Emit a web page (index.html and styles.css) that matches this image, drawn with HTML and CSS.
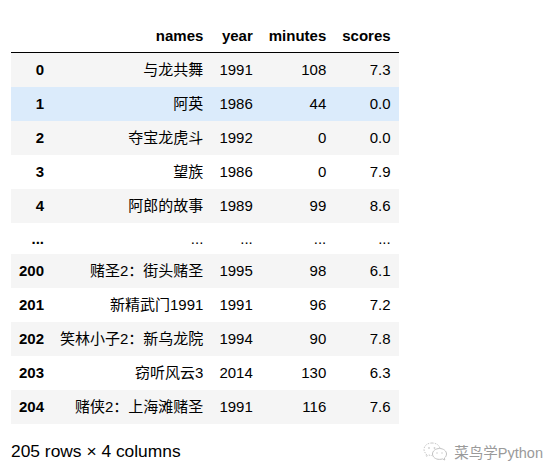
FILE: index.html
```html
<!DOCTYPE html>
<html>
<head>
<meta charset="utf-8">
<link rel="stylesheet" href="styles.css">
</head>
<body>
<div class="page">
<table class="df">
  <thead>
    <tr><th></th><th>names</th><th>year</th><th>minutes</th><th>scores</th></tr>
  </thead>
  <tbody>
    <tr class="odd"><th>0</th><td>与龙共舞</td><td>1991</td><td>108</td><td>7.3</td></tr>
    <tr class="hover"><th>1</th><td>阿英</td><td>1986</td><td>44</td><td>0.0</td></tr>
    <tr class="odd"><th>2</th><td>夺宝龙虎斗</td><td>1992</td><td>0</td><td>0.0</td></tr>
    <tr><th>3</th><td>望族</td><td>1986</td><td>0</td><td>7.9</td></tr>
    <tr class="odd"><th>4</th><td>阿郎的故事</td><td>1989</td><td>99</td><td>8.6</td></tr>
    <tr class="dots"><th>...</th><td>...</td><td>...</td><td>...</td><td>...</td></tr>
    <tr class="odd"><th>200</th><td>赌圣2：街头赌圣</td><td>1995</td><td>98</td><td>6.1</td></tr>
    <tr><th>201</th><td>新精武门1991</td><td>1991</td><td>96</td><td>7.2</td></tr>
    <tr class="odd"><th>202</th><td>笑林小子2：新乌龙院</td><td>1994</td><td>90</td><td>7.8</td></tr>
    <tr><th>203</th><td>窃听风云3</td><td>2014</td><td>130</td><td>6.3</td></tr>
    <tr class="odd"><th>204</th><td>赌侠2：上海滩赌圣</td><td>1991</td><td>116</td><td>7.6</td></tr>
  </tbody>
</table>
<div class="footer">
  <p class="shape">205 rows × 4 columns</p>
  <div class="mark">
    <svg class="mark-icon" width="26" height="20" viewBox="0 0 26 20">
      <path d="M10 2 C5 2 2 5 2 8.5 C2 10.5 3 12 4.5 13 L4 15.5 L6.8 14 C7.8 14.3 8.8 14.5 10 14.5" fill="none" stroke="#c9c9c9" stroke-width="1" stroke-dasharray="1.6 1.2"/>
      <path d="M10 2 C14.5 2 17.5 4.5 18 7.5" fill="none" stroke="#c9c9c9" stroke-width="1" stroke-dasharray="1.6 1.2"/>
      <path d="M17.5 7.5 C21.5 7.5 24.5 10 24.5 13 C24.5 14.6 23.7 16 22.4 17 L22.8 19 L20.5 17.9 C19.6 18.2 18.6 18.4 17.5 18.4 C13.5 18.4 10.5 16 10.5 13 C10.5 10 13.5 7.5 17.5 7.5 Z" fill="none" stroke="#c2c2c2" stroke-width="1"/>
      <circle cx="7" cy="7" r="0.9" fill="#cfcfcf"/>
      <circle cx="12.5" cy="7" r="0.9" fill="#cfcfcf"/>
      <circle cx="15" cy="12" r="0.8" fill="#cfcfcf"/>
      <circle cx="20" cy="12" r="0.8" fill="#cfcfcf"/>
    </svg>
    <span class="mark-text">菜鸟学Python</span>
  </div>
</div>
</div>
</body>
</html>
```
FILE: styles.css
```css
html, body {
  margin: 0;
  padding: 0;
  background: #ffffff;
}

.page {
  padding: 20px 0 0 11px;
  font-family: "Liberation Sans", Arial, "Noto Sans CJK SC", sans-serif;
  color: #000;
}

.df {
  border-collapse: collapse;
  border-spacing: 0;
  font-size: 15px;
}

.df thead th {
  font-weight: bold;
  text-align: right;
  padding: 6px 8px;
  line-height: 20px;
  border-bottom: 1px solid #000;
}

.df tbody th {
  font-weight: bold;
  text-align: right;
  padding: 7px 8px;
  line-height: 20px;
}

.df tbody td {
  text-align: right;
  padding: 7px 8px;
  line-height: 20px;
  white-space: nowrap;
}

.df tbody tr.odd {
  background: #f5f5f5;
}

.df tbody tr.hover {
  background: #dbebfb;
}

.df tbody tr.dots th,
.df tbody tr.dots td {
  line-height: 17px;
}

.footer {
  display: flex;
  justify-content: space-between;
  align-items: center;
  padding-right: 17px;
  margin-top: 16px;
}

.shape {
  margin: 0;
  font-size: 17.4px;
  line-height: 22px;
}

.mark {
  display: flex;
  align-items: center;
  gap: 6px;
}

.mark-icon {
  display: block;
}

.mark-text {
  font-size: 14.5px;
  color: #9a9a9a;
  font-family: "Liberation Sans", "Noto Sans CJK SC", sans-serif;
}
```
